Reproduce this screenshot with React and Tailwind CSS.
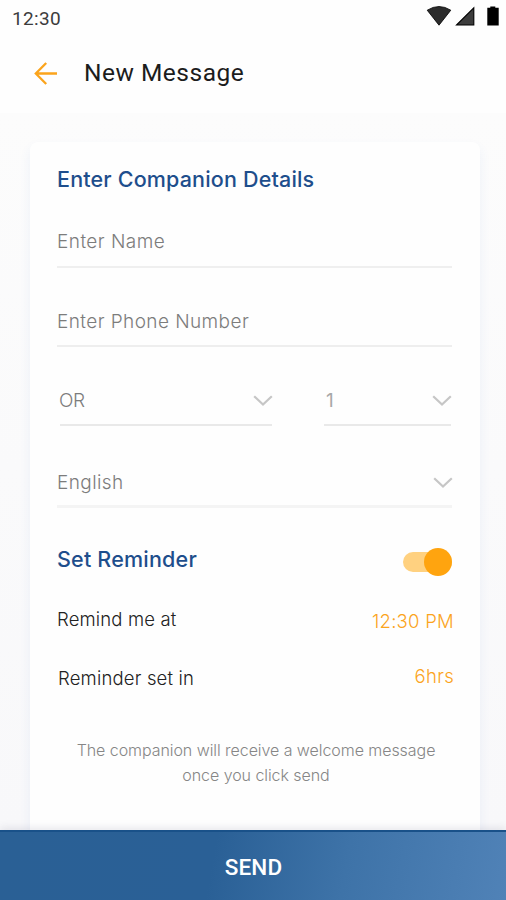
import React from "react";

function Chevron() {
  return (
    <svg width="20" height="12" viewBox="0 0 20 12" fill="none" stroke="#c6c6c6" strokeWidth="2.2" className="shrink-0">
      <path d="M1.2 1.2 10 9.6 18.8 1.2" />
    </svg>
  );
}

function StatusBar() {
  return (
    <div className="flex h-9 items-start justify-between pl-[12px] pr-[6px]">
      <span className="pt-[7px] text-[19px] leading-6 tracking-[0.35px] text-[#3c3c3c]">12:30</span>
      <svg width="74" height="21" viewBox="0 0 74 21" className="mt-[5px]">
        <path d="M1.2 5.2Q13 -2.2 24.8 5.2L13 20.2Z" fill="#2c2c2c" stroke="#000" strokeWidth="0.8" />
        <path d="M30.5 20H47.8V2.8Z" fill="#3c3c3c" stroke="#000" strokeWidth="1.1" />
        <path d="M61.3 2.8h3v-1.3h5v1.3h3.4v17.7H61.3Z" fill="#000" />
      </svg>
    </div>
  );
}

export default function App() {
  return (
    <div className="flex h-[900px] w-[506px] flex-col overflow-hidden bg-[#fefefe] font-['Roboto',sans-serif]">
      <StatusBar />
      <header className="flex h-[77px] items-center pb-[3px] pl-[34px]">
        <svg width="24" height="24" viewBox="0 0 24 24" fill="none" stroke="#fba41c" strokeWidth="2.3">
          <path d="M23 12.5H2M12.2 2 1.8 12.5l10.4 10.5" />
        </svg>
        <h1 className="ml-[26px] text-[24.5px] leading-8 tracking-[0.5px] text-[#1c1c1c]">New Message</h1>
      </header>
      <main className="flex flex-1 flex-col bg-linear-to-b from-[#fcfcfc] to-[#f8f8fa] pl-[30px] pr-[26px] pt-[29px]">
        <section className="flex flex-1 flex-col rounded-t-lg bg-[#fefefe] px-[27px] font-['Inter',sans-serif] shadow-[0_6px_12px_rgba(70,120,200,0.08)]">
          <h2 className="mt-[21px] h-8 text-[21.5px] font-medium leading-8 tracking-[0.17px] text-[#1e4e8c]">
            <span>Enter Companion Details</span>
          </h2>
          <div className="mt-[13px] flex h-[60px] w-[395px] items-center border-b-2 border-[#efefef] pt-[10px] text-[19px] font-light tracking-[0.45px] text-[#7c7c7c]">
            <span>Enter Name</span>
          </div>
          <div className="flex h-[79px] w-[395px] items-center border-b-2 border-[#eeeeee] pt-[32px] text-[19px] font-light tracking-[0.42px] text-[#7c7c7c]">
            <span>Enter Phone Number</span>
          </div>
          <div className="flex w-[395px] justify-between pl-[3px] pr-px">
            <div className="flex h-[79px] w-[212px] items-center justify-between border-b-2 border-[#e9e9e9] pt-[31px] text-[19px] font-light tracking-[-0.4px] text-[#7c7c7c]">
              <span className="-ml-px">OR</span>
              <div className="-mr-px">
                <Chevron />
              </div>
            </div>
            <div className="flex h-[79px] w-[127px] items-center justify-between border-b-2 border-[#e9e9e9] pl-[2px] pt-[31px] text-[19px] text-[#a8a8a8]">
              <span>1</span>
              <div className="-mr-px">
                <Chevron />
              </div>
            </div>
          </div>
          <div className="flex h-[82px] w-[395px] items-center justify-between border-b-[3px] border-[#f4f4f4] pt-[35px] text-[19px] font-light tracking-[0.4px] text-[#7c7c7c]">
            <span>English</span>
            <div className="-mr-px">
              <Chevron />
            </div>
          </div>
          <div className="mt-[36px] flex h-8 w-[395px] items-center justify-between">
            <h2 className="mb-[2px] text-[21.5px] font-medium tracking-[0.2px] text-[#1e4e8c]">Set Reminder</h2>
            <div className="mt-[3px] flex h-5 w-[49px] items-center justify-end rounded-full bg-[#ffd180]">
              <span className="size-7 shrink-0 rounded-full bg-[#ffa40f]" />
            </div>
          </div>
          <div className="mt-[28px] flex h-8 w-[397px] items-center justify-between text-[18.5px] font-light">
            <span className="tracking-[0.15px] text-[#222]">Remind me at</span>
            <span className="mt-[4px] tracking-[0.25px] text-[#fba41c]">12:30 PM</span>
          </div>
          <div className="mt-[27px] flex h-8 w-[397px] items-center justify-between pl-px text-[18.5px] font-light">
            <span className="tracking-[0.18px] text-[#222]">Reminder set in</span>
            <span className="mb-[5px] tracking-[0.3px] text-[#fba41c]">6hrs</span>
          </div>
          <p className="mt-[43px] pl-[2px] text-center text-[16px] font-light leading-[25px] tracking-[-0.06px] text-[#868686]">
            <span>The companion will receive a welcome message</span>
            <br />
            <span>once you click send</span>
          </p>
        </section>
      </main>
      <footer className="relative h-[70px] shrink-0 border-t-2 border-[#195189] bg-[linear-gradient(100deg,#2a6095_0%,#2a6096_42%,#3e73a8_68%,#5082b7_100%)] shadow-[0_-2px_8px_rgba(60,60,90,0.12)]">
        <button className="flex h-full w-full items-center justify-center pl-px pt-[4px] text-[22.5px] font-medium tracking-[0.1px] text-white">
          <span>SEND</span>
        </button>
      </footer>
    </div>
  );
}
